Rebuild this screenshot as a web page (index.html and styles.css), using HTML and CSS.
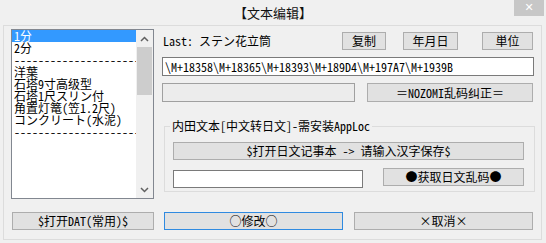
FILE: index.html
```html
<!DOCTYPE html>
<html lang="zh-CN">
<head>
<meta charset="UTF-8">
<title>文本编辑</title>
<link rel="stylesheet" href="styles.css">
</head>
<body>
<div class="titlebar">
	<span class="title">【文本编辑】</span>
	<span class="close">&#x2715;</span>
</div>
<div class="panel">
	<!-- item list -->
	<div class="listbox">
		<div class="items">
			<div class="item sel">1分</div>
			<div class="item">2分</div>
			<div class="item">---------------------</div>
			<div class="item">洋葉</div>
			<div class="item">石塔9寸高级型</div>
			<div class="item">石塔1尺スリン付</div>
			<div class="item">角置灯篭(笠1.2尺)</div>
			<div class="item">コンクリート(水泥)</div>
			<div class="item">---------------------</div>
		</div>
		<div class="scrollbar">
			<div class="arrow"><svg width="9" height="6" viewBox="0 0 9 6"><path d="M1 5 L4.5 1.5 L8 5" fill="none" stroke="#606060" stroke-width="1.5"/></svg></div>
			<div class="thumb"></div>
			<div class="track"></div>
			<div class="arrow"><svg width="9" height="6" viewBox="0 0 9 6"><path d="M1 1 L4.5 4.5 L8 1" fill="none" stroke="#606060" stroke-width="1.5"/></svg></div>
		</div>
	</div>

	<!-- edit area -->
	<div class="main">
		<div class="row top">
			<span class="last">Last: ステン花立筒</span>
			<button class="btn copy">复制</button>
			<button class="btn date">年月日</button>
			<button class="btn unit">単位</button>
		</div>
		<input class="edit code" type="text" value="\M+18358\M+18365\M+18393\M+189D4\M+197A7\M+1939B">
		<div class="row mid">
			<div class="status"></div>
			<button class="btn fix">＝NOZOMI乱码纠正＝</button>
		</div>
		<fieldset class="group">
			<legend>内田文本[中文转日文]-需安装AppLoc</legend>
			<button class="btn wide">$打开日文记事本 -&gt; 请输入汉字保存$</button>
			<div class="row low">
				<input class="edit short" type="text">
				<button class="btn get">●获取日文乱码●</button>
			</div>
		</fieldset>
	</div>

	<button class="btn dat">$打开DAT(常用)$</button>
	<div class="actions">
		<button class="btn primary">○修改○</button>
		<button class="btn">×取消×</button>
	</div>
</div>
</body>
</html>
```

FILE: styles.css
```css
* {
	box-sizing: border-box;
}

body {
	margin: 0;
	width: 546px;
	height: 243px;
	overflow: hidden;
	background: #f0f0f0;
	color: #000;
	font: 12px/12px "Noto Sans Mono CJK SC", "Noto Sans CJK SC", sans-serif;
}

/* Window title */
.titlebar {
	height: 25px;
	display: grid;
	grid-template-columns: 1fr auto 1fr;
}
.title {
	grid-column: 2;
	font-size: 13px;
	line-height: 25px;
	color: #111;
}
.close {
	grid-column: 3;
	justify-self: end;
	width: 30px;
	height: 16px;
	margin-right: 2px;
	background: #c7c7c7;
	color: #fff;
	font: bold 11px/16px "DejaVu Sans", sans-serif;
	text-align: center;
}

/* Main panel */
.panel {
	margin-left: 3px;
	width: 539px;
	height: 215px;
	border: 1px solid #dcdcdc;
	padding: 3px 7px 9px 7px;
	display: grid;
	grid-template-columns: 143px 372px;
	grid-template-rows: 170px 18px;
	column-gap: 8px;
	row-gap: 13px;
}

/* List box */
.listbox {
	display: flex;
	border: 1px solid #828790;
	background: #fff;
}
.items {
	flex: 1;
	overflow: hidden;
}
.item {
	height: 12px;
	padding-left: 2px;
	white-space: nowrap;
}
.item.sel {
	background: #3399ff;
	color: #fff;
}
.scrollbar {
	width: 17px;
	display: flex;
	flex-direction: column;
	background: #f0f0f0;
}
.arrow {
	height: 17px;
	display: flex;
	align-items: center;
	justify-content: center;
}
.thumb {
	height: 48px;
	margin: 0 1px;
	background: #cdcdcd;
}
.track {
	flex: 1;
}

/* Buttons and fields */
.btn {
	height: 18px;
	padding: 0;
	border: 1px solid #adadad;
	background: #e1e1e1;
	color: #000;
	font: inherit;
	line-height: 16px;
	white-space: nowrap;
}
.btn.primary {
	border-color: #2f8ae0;
}
.edit {
	border: 1px solid #7a7a7a;
	background: #fff;
	padding: 0 2px;
	font: inherit;
	color: #000;
	outline: none;
}

.main {
	display: flex;
	flex-direction: column;
}
.row {
	display: flex;
	align-items: center;
}
.row.top {
	margin-top: 3px;
	height: 18px;
}
.last {
	flex: 1;
	padding-left: 1px;
}
.copy { width: 44px; margin-right: 17px; }
.date { width: 55px; margin-right: 24px; }
.unit { width: 51px; margin-right: 1px; }

.code {
	margin-top: 7px;
	width: 372px;
	height: 19px;
}
.row.mid {
	margin-top: 7px;
	height: 19px;
}
.status {
	width: 193px;
	height: 19px;
	border: 1px solid #a0a0a0;
	background: #ececec;
}
.fix {
	width: 166px;
	height: 19px;
	margin-left: 12px;
}

/* Group box */
.group {
	margin: 18px 0 0 2px;
	width: 371px;
	min-width: 0;
	padding: 10px 10px 3px 8px;
	border: 1px solid #dcdcdc;
}
.group legend {
	margin-left: -3px;
	padding: 0 2px;
	line-height: 12px;
}
.wide {
	width: 351px;
}
.row.low {
	margin-top: 8px;
	align-items: flex-start;
}
.short {
	width: 190px;
	height: 18px;
	margin-top: 2px;
}
.get {
	width: 141px;
	margin-left: 20px;
}

/* Bottom buttons */
.dat {
	width: 142px;
	margin-left: 1px;
}
.actions {
	display: flex;
	gap: 11px;
	padding-left: 2px;
}
.actions .btn {
	width: 179px;
}
```
